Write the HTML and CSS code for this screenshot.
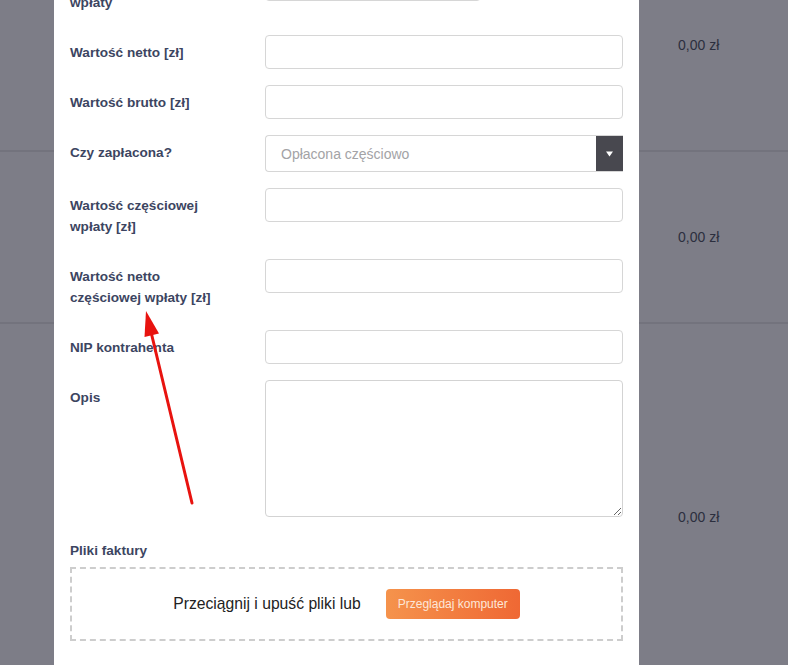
FILE: index.html
```html
<!DOCTYPE html>
<html lang="pl">
<head>
<meta charset="utf-8">
<title>Faktura</title>
<link rel="stylesheet" href="styles.css">
</head>
<body>
<div class="page">
  <div class="bg-table">
    <div class="bg-row bg-row-1"><div class="bg-main"></div><div class="bg-value">0,00 zł</div></div>
    <div class="bg-row bg-row-2"><div class="bg-main"></div><div class="bg-value">0,00 zł</div></div>
    <div class="bg-row bg-row-3"><div class="bg-main"></div><div class="bg-value">0,00 zł</div></div>
  </div>

  <div class="modal">
    <div class="form-row">
      <label class="form-label">Data ostatniej<br>wpłaty</label>
      <div class="control"><input class="input input-date" type="text"></div>
    </div>
    <div class="form-row">
      <label class="form-label">Wartość netto [zł]</label>
      <div class="control"><input class="input" type="text"></div>
    </div>
    <div class="form-row">
      <label class="form-label">Wartość brutto [zł]</label>
      <div class="control"><input class="input" type="text"></div>
    </div>
    <div class="form-row">
      <label class="form-label">Czy zapłacona?</label>
      <div class="control">
        <div class="select">
          <span class="select-value">Opłacona częściowo</span>
          <span class="select-arrow"><svg width="7" height="6" viewBox="0 0 7 6"><path d="M0 0.5 H7 L3.5 5.5 Z" fill="#ffffff"/></svg></span>
        </div>
      </div>
    </div>
    <div class="form-row">
      <label class="form-label">Wartość częściowej wpłaty [zł]</label>
      <div class="control"><input class="input" type="text"></div>
    </div>
    <div class="form-row">
      <label class="form-label">Wartość netto częściowej wpłaty [zł]</label>
      <div class="control"><input class="input" type="text"></div>
    </div>
    <div class="form-row">
      <label class="form-label">NIP kontrahenta</label>
      <div class="control"><input class="input" type="text"></div>
    </div>
    <div class="form-row">
      <label class="form-label">Opis</label>
      <div class="control"><textarea class="textarea"></textarea></div>
    </div>
    <div class="files">
      <div class="form-label">Pliki faktury</div>
      <div class="dropzone">
        <span class="dropzone-text">Przeciągnij i upuść pliki lub</span>
        <button class="btn-browse" type="button">Przeglądaj komputer</button>
      </div>
    </div>
  </div>

  <svg class="annotation" width="788" height="665" viewBox="0 0 788 665">
    <line x1="192" y1="503" x2="151.5" y2="334" stroke="#e8130f" stroke-width="3" stroke-linecap="round"/>
    <polygon points="146,311 159,333.5 144.5,337" fill="#e8130f"/>
  </svg>
</div>
</body>
</html>
```

FILE: styles.css
```css
* { box-sizing: border-box; }

html, body {
  margin: 0;
  padding: 0;
  width: 788px;
  height: 665px;
  overflow: hidden;
  background: #7d7d87;
  font-family: "Liberation Sans", Arial, sans-serif;
}

.page {
  position: relative;
  width: 788px;
  height: 665px;
  overflow: hidden;
}

.bg-table {
  margin-top: -60px;
}

.bg-row {
  display: grid;
  grid-template-columns: 1fr 110px;
  align-items: center;
  border-top: 2px solid #73737d;
}

.bg-row-1 { height: 210px; border-top: none; }
.bg-row-2 { height: 172px; }
.bg-row-3 { height: 388px; }

.bg-value {
  font-size: 14px;
  color: #2c2f3e;
}

.modal {
  position: absolute;
  left: 54px;
  top: -36px;
  width: 585px;
  height: 720px;
  background: #ffffff;
  padding: 0 16px;
}

.form-row {
  display: grid;
  grid-template-columns: 155px 1fr;
  column-gap: 40px;
  align-items: start;
  margin-bottom: 16px;
}

.form-label {
  display: block;
  font-size: 13.6px;
  font-weight: bold;
  line-height: 21px;
  color: #3c4561;
  padding: 7px 0 6px;
}

.input {
  display: block;
  width: 100%;
  height: 34px;
  border: 1px solid #d6d6d6;
  border-radius: 4px;
  background: #fff;
  font: 14px "Liberation Sans", Arial, sans-serif;
  outline: none;
}

.input-date {
  width: 216px;
  height: 37px;
}

.select {
  display: flex;
  align-items: stretch;
  height: 37px;
  border: 1px solid #d6d6d6;
  border-right: none;
  border-radius: 4px 0 0 4px;
  overflow: hidden;
}

.select-value {
  flex: 1;
  display: flex;
  align-items: center;
  padding-left: 15px;
  font-size: 14px;
  color: #a3a3a6;
}

.select-arrow {
  width: 27px;
  margin: -1px 0;
  background: #48484f;
  display: flex;
  align-items: center;
  justify-content: center;
}

.textarea {
  display: block;
  width: 100%;
  height: 137px;
  border: 1px solid #d3d3d3;
  border-radius: 4px;
  resize: vertical;
  font: 14px "Liberation Sans", Arial, sans-serif;
  outline: none;
}

.files .form-label {
  padding: 7px 0 6px;
}

.dropzone {
  height: 74px;
  border: 2px dashed #cdcdcd;
  display: flex;
  align-items: center;
  justify-content: center;
  gap: 25px;
}

.dropzone-text {
  font-size: 15.7px;
  color: #222222;
}

.btn-browse {
  height: 30px;
  padding: 0 12px;
  border: none;
  border-radius: 4px;
  background: linear-gradient(to right, #f5934c, #ef6834);
  color: #fde7d8;
  font: 12px "Liberation Sans", Arial, sans-serif;
}

.annotation {
  position: absolute;
  left: 0;
  top: 0;
  pointer-events: none;
}
```
